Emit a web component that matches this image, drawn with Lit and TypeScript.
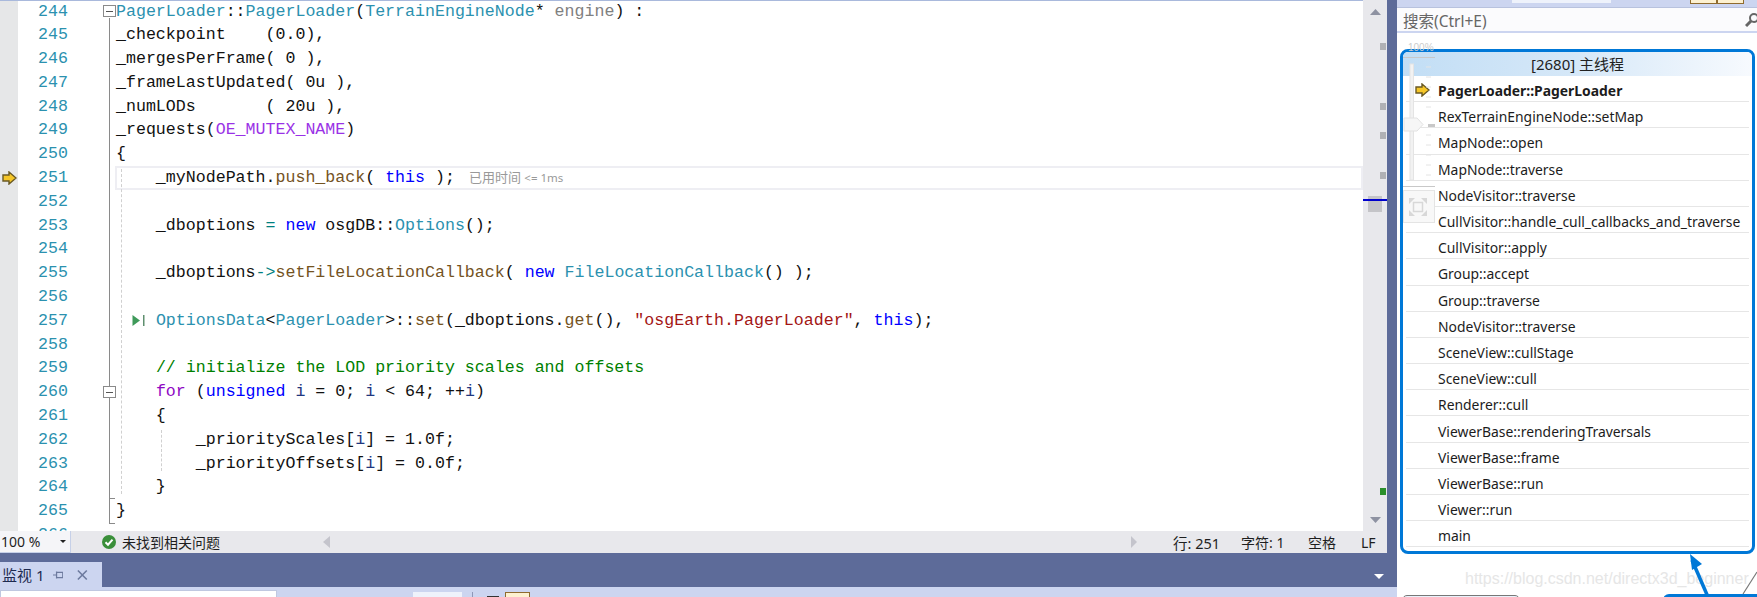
import { LitElement, html, css, svg } from "lit";
import { customElement } from "lit/decorators.js";

type Tok = [string, string];
const p = (s: string): Tok => ["", s];
const ty = (s: string): Tok => ["ty", s];
const fn = (s: string): Tok => ["fn", s];
const kw = (s: string): Tok => ["kw", s];
const op = (s: string): Tok => ["op", s];
const lv = (s: string): Tok => ["lv", s];

const LINES: Tok[][] = [
  [ty("PagerLoader"), p("::"), ty("PagerLoader"), p("("), ty("TerrainEngineNode"), p("* "), ["pm", "engine"], p(") :")],
  [p("_checkpoint    (0.0),")],
  [p("_mergesPerFrame( 0 ),")],
  [p("_frameLastUpdated( 0u ),")],
  [p("_numLODs       ( 20u ),")],
  [p("_requests("), ["mc", "OE_MUTEX_NAME"], p(")")],
  [p("{")],
  [p("    _myNodePath."), fn("push_back"), p("( "), kw("this"), p(" );")],
  [],
  [p("    _dboptions "), op("="), p(" "), kw("new"), p(" osgDB::"), ty("Options"), p("();")],
  [],
  [p("    _dboptions"), op("->"), fn("setFileLocationCallback"), p("( "), kw("new"), p(" "), ty("FileLocationCallback"), p("() );")],
  [],
  [p("    "), ty("OptionsData"), p("<"), ty("PagerLoader"), p(">::"), fn("set"), p("(_dboptions."), fn("get"), p("(), "), ["st", '"osgEarth.PagerLoader"'], p(", "), kw("this"), p(");")],
  [],
  [p("    "), ["cm", "// initialize the LOD priority scales and offsets"]],
  [p("    "), ["ct", "for"], p(" ("), kw("unsigned"), p(" "), lv("i"), p(" = 0; "), lv("i"), p(" < 64; ++"), lv("i"), p(")")],
  [p("    {")],
  [p("        _priorityScales["), lv("i"), p("] = 1.0f;")],
  [p("        _priorityOffsets["), lv("i"), p("] = 0.0f;")],
  [p("    }")],
  [p("}")],
  [],
];

const FRAMES = [
  "PagerLoader::PagerLoader",
  "RexTerrainEngineNode::setMap",
  "MapNode::open",
  "MapNode::traverse",
  "NodeVisitor::traverse",
  "CullVisitor::handle_cull_callbacks_and_traverse",
  "CullVisitor::apply",
  "Group::accept",
  "Group::traverse",
  "NodeVisitor::traverse",
  "SceneView::cullStage",
  "SceneView::cull",
  "Renderer::cull",
  "ViewerBase::renderingTraversals",
  "ViewerBase::frame",
  "ViewerBase::run",
  "Viewer::run",
  "main",
];

const arrow = svg`<svg class="ptr" width="15" height="14" viewBox="0 0 15 14"><path d="M1 4 H7 V1 L14 7 L7 13 V10 H1 Z" fill="#f5c628" stroke="#6a5a24" stroke-width="1.4"/></svg>`;
const MARKS = [43, 103, 132, 172];

@customElement("app-root")
export class AppRoot extends LitElement {
  static styles = css`
    :host { display: block; width: 1757px; height: 597px; overflow: hidden; }
    .root { display: flex; width: 1757px; height: 597px; overflow: hidden; font-family: "Noto Sans", "Noto Sans CJK SC", sans-serif; color: #1e1e1e; }
    .left { width: 1397px; flex: none; display: flex; flex-direction: column; background: #5d6b99; }
    .editor { display: flex; height: 531px; flex: none; }
    .view { width: 1363px; flex: none; position: relative; overflow: hidden; background: #fff; box-sizing: border-box; border-top: 1px solid #a9b9dc; }
    .lines { margin-top: -1.5px; }
    .row { display: flex; height: 23.81px; font: 16.63px/23.81px "Liberation Mono", monospace; white-space: pre; color: #111; }
    .mark { width: 18px; flex: none; background: #e6e7e8; display: flex; align-items: center; justify-content: center; }
    .num { width: 50px; flex: none; box-sizing: border-box; padding-left: 20px; color: #2b91af; }
    .fold { width: 48px; flex: none; display: flex; align-items: center; padding-left: 35px; box-sizing: border-box; }
    .fold i { display: flex; width: 11px; height: 10px; border: 1px solid #8a8a8a; background: #fff; align-items: center; justify-content: center; position: relative; z-index: 1; }
    .fold i::before { content: ""; width: 7px; height: 1px; background: #555; }
    .code { flex: 1; position: relative; }
    .code.cur { box-shadow: inset 0 0 0 2px #eeeef3; margin-left: -1px; padding-left: 1px; }
    .ty { color: #2b91af; }
    .fn { color: #74531f; }
    .kw { color: #0000ff; }
    .op { color: #008080; }
    .lv { color: #1f377f; }
    .pm { color: #808080; }
    .mc { color: #9a32e6; }
    .st { color: #a31515; }
    .cm { color: #008000; }
    .ct { color: #8f08c4; }
    .hint { font: 13px/23px "Noto Sans", "Noto Sans CJK SC", sans-serif; color: #999; margin-left: 14px; }
    .hint small { font-size: 11.5px; }
    .run { position: absolute; left: 16px; top: 5px; }
    .fline { position: absolute; left: 109px; top: 17px; height: 506px; width: 1px; background: #8a8a8a; }
    .ftick { position: absolute; left: 109px; width: 6px; height: 1px; background: #8a8a8a; }
    .guide { position: absolute; width: 0; border-left: 1px dashed #d0d0d0; }
    .sb { width: 24px; flex: none; position: relative; background: #e8e8ec; }
    .pin { position: absolute; left: 17px; width: 6px; height: 7px; background: #b0b0b4; }
    .pin.green { background: #2b8f2b; }
    .thumb { position: absolute; left: 5px; top: 196px; width: 14px; height: 16px; background: #c4c4c8; }
    .caretline { position: absolute; left: 0; right: 0; top: 199px; height: 2px; background: #0000cd; }
    .tri { position: absolute; left: 7px; }
    .rail { width: 10px; flex: none; background: #5d6b99; }
    .status { width: 1387px; height: 22px; flex: none; background: #e8e8ec; display: flex; align-items: center; font-size: 14px; }
    .combo { width: 71px; height: 22px; box-sizing: border-box; flex: none; background: #f5f5f8; border: 1px solid #c6d0e8; border-width: 0 1px 1px 0; display: flex; align-items: center; justify-content: space-between; padding: 0 4px 0 1px; font-size: 14px; }
    .combo b { width: 0; height: 0; border: 3.5px solid transparent; border-top-color: #222; border-bottom: 0; }
    .ok { display: flex; align-items: center; gap: 6px; margin-left: 31px; }
    .harrow { width: 0; height: 0; border-style: solid; border-width: 6px; border-color: transparent; flex: none; }
    .harrow.l { border-right: 7px solid #c4c4cc; border-left: 0; margin-left: 103px; }
    .harrow.r { border-left: 6px solid #c4c4cc; border-right: 0; margin-left: 801px; }
    .cell1 { margin-left: 36px; width: 68px; font-size: 14.5px; }
    .cell2 { width: 67px; }
    .cell3 { width: 53px; }
    .dock { height: 34px; flex: none; box-sizing: border-box; width: 1387px; padding-top: 9px; display: flex; justify-content: space-between; }
    .tab { width: 102px; height: 25px; background: #ccd5f0; display: flex; align-items: center; padding-left: 2px; box-sizing: border-box; font-size: 15px; color: #1e2a50; }
    .tab span { width: 57px; }
    .tab svg { margin-right: 14px; }
    .dropd { width: 0; height: 0; border: 5px solid transparent; border-top-color: #fff; border-bottom: 0; margin-top: 12px; margin-right: 3px; }
    .strip { height: 10px; flex: none; background: #ccd5f0; position: relative; overflow: hidden; }
    .wbox { position: absolute; left: 0; top: 3px; width: 277px; height: 10px; background: #fff; border: 1px solid #c0c8e0; box-sizing: border-box; }
    .lbox { position: absolute; left: 413px; top: 5px; width: 49px; height: 8px; background: #eef2fb; }
    .sep { position: absolute; left: 472px; top: 5px; width: 1px; height: 8px; background: #8f98b8; }
    .blk { position: absolute; left: 487px; top: 9px; width: 12px; height: 3px; background: #333; }
    .act { position: absolute; left: 505px; top: 5px; width: 25px; height: 8px; background: #fdf1d0; border: 1px solid #8f6b2e; box-sizing: border-box; }
    .right { flex: 1; background: #fff; position: relative; overflow: hidden; display: flex; flex-direction: column; }
    .tools { height: 7px; flex: none; background: #ccd5f0; position: relative; }
    .tools .w { position: absolute; left: 115px; top: 0; width: 99px; height: 3px; background: #eef2fb; }
    .tools .t { position: absolute; top: -1px; height: 5px; width: 27px; background: #fdf1d0; border: 1px solid #8f6b2e; box-sizing: border-box; }
    .search { height: 26px; flex: none; box-sizing: border-box; background: #fbfbfd; border-top: 1px solid #b8c2de; border-bottom: 2px solid #ccd5f0; display: flex; align-items: center; justify-content: space-between; padding: 1px 0 0 6px; font-size: 15.5px; color: #666; }
    .search svg { margin-right: -2px; }
    .stack { margin: 16px 0 0 3px; width: 355px; height: 505px; box-sizing: border-box; border: 3px solid #0078d7; border-radius: 8px; overflow: hidden; flex: none; display: flex; flex-direction: column; }
    .head { height: 24px; flex: none; background: linear-gradient(90deg, #c2def5 0%, #d6e8f8 50%, #f7fafe 100%); text-align: center; font-size: 15px; line-height: 24px; color: #222; }
    .frames { padding: 0 3px; }
    .frame { height: 26.2px; box-sizing: border-box; border-bottom: 1px solid #e6e6e6; display: flex; align-items: center; padding: 4px 0 0 32px; font-size: 13.9px; color: #1c1c1c; position: relative; }
    .frame.top { font-weight: 700; }
    .frame svg { position: absolute; left: 9px; top: 7px; }
    .over { position: absolute; inset: 0; pointer-events: none; }
    .pct { position: absolute; left: 11px; top: 42px; font: 10px/12px "Liberation Sans", sans-serif; color: #ccc; }
    .wm { position: absolute; left: 68px; top: 569px; font: 16px/20px "Liberation Sans", sans-serif; color: #e6e6e6; white-space: nowrap; }
    .box1 { position: absolute; left: 5px; top: 595px; width: 118px; height: 20px; border: 1.5px solid #777; border-radius: 5px; box-sizing: border-box; background: #e8f2fb; }
    .box2 { position: absolute; left: 266px; top: 594px; width: 110px; height: 20px; background: #0078d7; border-radius: 6px; }
  `;

  private renderRow(toks: Tok[], i: number) {
    const n = 244 + i;
    const cur = n === 251;
    return html`<div class="row">
      <div class="mark">${cur ? arrow : ""}</div>
      <div class="num">${n}</div>
      <div class="fold">${n === 244 || n === 260 ? html`<i></i>` : ""}</div>
      <div class="code ${cur ? "cur" : ""}">${toks.map(([c, t]) => html`<span class=${c}>${t}</span>`)}${cur
        ? html`<span class="hint">已用时间 <small>&lt;= 1ms</small></span>`
        : ""}${n === 257
        ? html`<svg class="run" width="13" height="13" viewBox="0 0 13 13"><path d="M0.5 1 L8 6.5 L0.5 12 Z" fill="#3f9a5a"/><rect x="11" y="1" width="1.5" height="11" fill="#5f8f6f"/></svg>`
        : ""}</div>
    </div>`;
  }

  render() {
    return html`<div class="root">
      <div class="left">
        <div class="editor">
          <div class="view">
            <div class="lines">${LINES.map((l, i) => this.renderRow(l, i))}</div>
            <div class="fline"></div>
            <div class="ftick" style="top:497px"></div>
            <div class="ftick" style="top:522px"></div>
            <div class="guide" style="left:121px;top:168px;height:325px"></div>
            <div class="guide" style="left:161px;top:429px;height:41px"></div>
          </div>
          <div class="sb">
            <svg class="tri" style="top:9px" width="11" height="6" viewBox="0 0 11 6"><path d="M5.5 0 L11 6 H0 Z" fill="#8e92a2"/></svg>
            ${MARKS.map((y) => html`<div class="pin" style="top:${y}px"></div>`)}
            <div class="thumb"></div>
            <div class="caretline"></div>
            <div class="pin green" style="top:488px"></div>
            <svg class="tri" style="top:517px" width="11" height="6" viewBox="0 0 11 6"><path d="M0 0 H11 L5.5 6 Z" fill="#8e92a2"/></svg>
          </div>
          <div class="rail"></div>
        </div>
        <div class="status">
          <div class="combo">100 %<b></b></div>
          <div class="ok">
            <svg width="14" height="14" viewBox="0 0 14 14"><circle cx="7" cy="7" r="7" fill="#3a8f3a"/><path d="M3.5 7.2 L6 9.7 L10.5 4.6" fill="none" stroke="#fff" stroke-width="2"/></svg>
            <span>未找到相关问题</span>
          </div>
          <div class="harrow l"></div>
          <div class="harrow r"></div>
          <div class="cell1">行: 251</div>
          <div class="cell2">字符: 1</div>
          <div class="cell3">空格</div>
          <div>LF</div>
        </div>
        <div class="dock">
          <div class="tab">
            <span>监视 1</span>
            <svg width="12" height="12" viewBox="0 0 12 12"><path d="M0 6 H4 M4 2 V10 M4 3 H11 V9 H4" fill="none" stroke="#6d7a9e" stroke-width="1.4"/></svg>
            <svg width="12" height="12" viewBox="0 0 12 12"><path d="M1 1 L11 11 M11 1 L1 11" stroke="#6d7a9e" stroke-width="1.8"/></svg>
          </div>
          <div class="dropd"></div>
        </div>
        <div class="strip">
          <div class="wbox"></div>
          <div class="lbox"></div>
          <div class="sep"></div>
          <div class="blk"></div>
          <div class="act"></div>
        </div>
      </div>
      <div class="right">
        <div class="tools">
          <div class="w"></div>
          <div class="t" style="left:293px"></div>
          <div class="t" style="left:320px"></div>
        </div>
        <div class="search">
          <span>搜索(Ctrl+E)</span>
          <svg width="14" height="16" viewBox="0 0 14 16"><circle cx="9" cy="6" r="4" fill="none" stroke="#666" stroke-width="2"/><path d="M6 9 L1 14" stroke="#666" stroke-width="3"/></svg>
        </div>
        <div class="stack">
          <div class="head">[2680] 主线程</div>
          <div class="frames">
            ${FRAMES.map(
              (f, i) => html`<div class="frame ${i === 0 ? "top" : ""}">${i === 0 ? arrow : ""}${f}</div>`
            )}
          </div>
        </div>
        <div class="over">
          <div class="pct">100%</div>
          <svg style="position:absolute;left:0;top:50px" width="42" height="176" viewBox="0 0 42 176">
            <path d="M6 7.5 H38 M6 136.5 H38" stroke="#c8c8c8" fill="none"/>
            <rect x="13" y="14" width="3.500" height="116" fill="#f2f2f2" stroke="#e4e4e4"/>
            <path d="M29 17 H34 M29 27 H34 M29 37 H34 M29 47 H34 M29 57 H34 M29 85 H34 M29 95 H34 M29 105 H34 M29 115 H34 M29 125 H34" stroke="#e4e4e4" fill="none"/>
            <path d="M7 68 H20 L26 74.5 L20 81 H7 Z" fill="#f6f6f6" stroke="#e2e2e2"/>
            <rect x="31" y="74" width="7" height="3" fill="#c8c8c8"/>
            <rect x="6.5" y="140.5" width="31" height="32" fill="#f8f8f8" stroke="#e4e4e4"/>
            <path d="M12 148 H18 L12 154 Z M30 148 H24 L30 154 Z M12 166 H18 L12 160 Z M30 166 H24 L30 160 Z" fill="#d8d8d8"/>
            <rect x="16.500" y="152.500" width="9" height="9" fill="none" stroke="#d8d8d8" stroke-width="1.5"/>
          </svg>
          <div class="wm">https://blog.csdn.net/directx3d_beginner</div>
          <div class="box1"></div>
          <div class="box2"></div>
          <svg style="position:absolute;left:280px;top:550px" width="80" height="47" viewBox="0 0 80 47">
            <path d="M15 10 L31 47" stroke="#0078d7" stroke-width="3.5" fill="none"/>
            <path d="M13 4 L25 14 L15 20 Z" fill="#0078d7"/>
            <path d="M80 22 L66 44" stroke="#777" stroke-width="1.2" fill="none"/>
          </svg>
        </div>
      </div>
    </div>`;
  }
}
